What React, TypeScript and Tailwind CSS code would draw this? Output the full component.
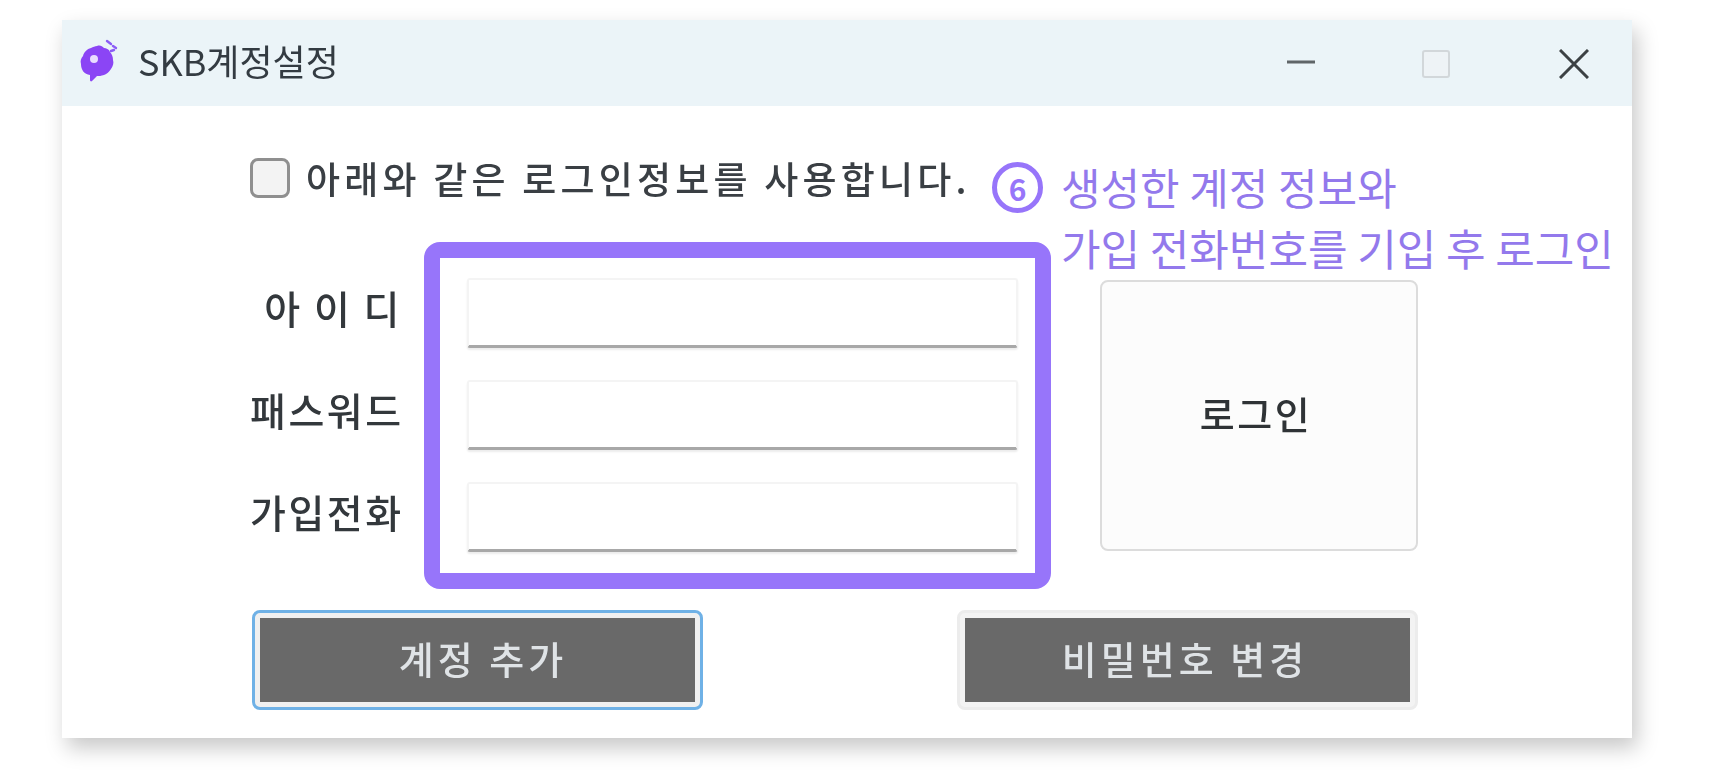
const font = "font-['Noto_Sans_CJK_KR','Noto_Sans',sans-serif]";

const Field = () => (
  <div className="h-[70px] w-[551px] rounded-[3px] border-2 border-b-[3px] border-[#f4f4f4] border-b-[#a8a8a8] bg-white shadow-[0_2px_2px_rgba(0,0,0,0.08)] blur-[0.4px]" />
);

const labels = ['아 이 디', '패스워드', '가입전화'];

export default function App() {
  return (
    <div className={`h-[784px] w-[1714px] overflow-hidden bg-white pl-[62px] pt-[20px] ${font}`}>
      <div className="relative h-[718px] w-[1570px] bg-white shadow-[5px_10px_20px_rgba(0,0,0,0.22)]">
        {/* Title bar */}
        <div className="flex h-[86px] items-center bg-[#ebf4f8] pl-[16px]">
          <svg width="42" height="48" viewBox="0 0 42 48" className="mr-[18px] -mt-[2px] blur-[0.3px]">
            <path
              d="M19 8c3-1 5 0 7 2 2 0 5 1 6 4 2 2 3 5 3 8 1 3 0 6-2 9-2 3-4 5-7 6-3 1-5 1-7 1l-5 5c-1 1-2 0-2-1v-5C6 36 3 32 3 26c-1-3 0-6 2-8 1-4 4-7 8-8 2-1 4-2 6-2z"
              fill="#8b45f5"
            />
            <circle cx="16" cy="21" r="4" fill="#e9dcff" />
            <path d="M29 3l4 3M35 8l3 2M33 13l3-1" stroke="#8b5cf6" strokeWidth="2.4" strokeLinecap="round" />
          </svg>
          <span className="-mt-[6px] text-[36px] leading-none text-[#333b42] blur-[0.5px]">SKB계정설정</span>
          <div className="ml-auto flex items-center">
            <svg width="30" height="30" viewBox="0 0 30 30" className="mr-[106px] -mt-[2px] blur-[0.4px]">
              <path d="M1 15h28" stroke="#5f6568" strokeWidth="3" />
            </svg>
            <div className="mr-[109px] mt-[1px] h-[28px] w-[28px] rounded-[3px] border-2 border-[#d2d7da] bg-[#eef3f6] blur-[0.4px]" />
            <svg width="30" height="30" viewBox="0 0 30 30" className="mr-[43px] mt-[2px] blur-[0.3px]">
              <path d="M1 1l28 28M29 1L1 29" stroke="#3c4144" strokeWidth="3" />
            </svg>
          </div>
        </div>

        {/* Body */}
        <div className="pl-[188px] pt-[52px]">
          <div className="flex h-[40px] items-center">
            <div className="h-[40px] w-[40px] rounded-[8px] border-[3px] border-[#8f8f8f] bg-[#f3f3f3] blur-[0.6px]" />
            <span className="ml-[16px] whitespace-nowrap text-[37px] font-medium leading-none tracking-[4.2px] text-[#3a3f44] blur-[0.6px]">
              아래와 같은 로그인정보를 사용합니다.
            </span>
          </div>

          <div className="mt-[44px] flex items-start">
            <div className="w-[152px] pt-[30px] text-right text-[39px] font-medium leading-[70px] tracking-[2.5px] text-[#33383c] blur-[0.6px]">
              <div className="flex flex-col gap-[32px]">
                {labels.map((label) => (
                  <div key={label} className="h-[70px] whitespace-nowrap">
                    {label}
                  </div>
                ))}
              </div>
            </div>
            <div className="ml-[22px] flex h-[347px] w-[627px] flex-col gap-[32px] rounded-[16px] border-[16px] border-[#9775fa] pl-[27px] pt-[20px]">
              <Field />
              <Field />
              <Field />
            </div>
            <button className="ml-[49px] mt-[38px] h-[271px] w-[318px] rounded-[8px] border-2 border-[#dcdcdc] bg-[#fcfcfc] pb-[6px] pr-[6px] text-[38px] font-medium tracking-[2.5px] text-[#2f3336] blur-[0.5px]">
              로그인
            </button>
          </div>

          <div className="mt-[21px] flex items-start">
            <div className="ml-[2px] flex h-[100px] w-[451px] items-center justify-center rounded-[8px] border-[3px] border-[#6fb1e6] bg-[#f0f0f0] p-[5px]">
              <div className="flex h-full w-full items-center justify-center bg-[#696969] pb-[6px] pl-[11px] text-[38px] font-medium tracking-[4px] text-[#dfe3e6] blur-[0.5px]">
                계정 추가
              </div>
            </div>
            <div className="ml-[254px] flex h-[100px] w-[461px] items-center justify-center rounded-[8px] border-[3px] border-[#ececec] bg-[#f3f3f3] p-[5px]">
              <div className="flex h-full w-full items-center justify-center bg-[#696969] pb-[6px] pr-[5px] text-[38px] font-medium tracking-[4px] text-[#dfe3e6] blur-[0.5px]">
                비밀번호 변경
              </div>
            </div>
          </div>
        </div>

        {/* Annotation */}
        <div className="absolute left-[930px] top-[142px] flex items-start text-[#9379ec]">
          <div className="flex h-[51px] w-[51px] items-center justify-center rounded-full border-[5px] border-[#9775fa] text-[30px] font-bold leading-none text-[#9775fa]">
            6
          </div>
          <div className="ml-[18px] -mt-[6px] whitespace-nowrap text-[43px] leading-[61px]">
            생성한 계정 정보와
            <br />
            가입 전화번호를 기입 후 로그인
          </div>
        </div>
      </div>
    </div>
  );
}
